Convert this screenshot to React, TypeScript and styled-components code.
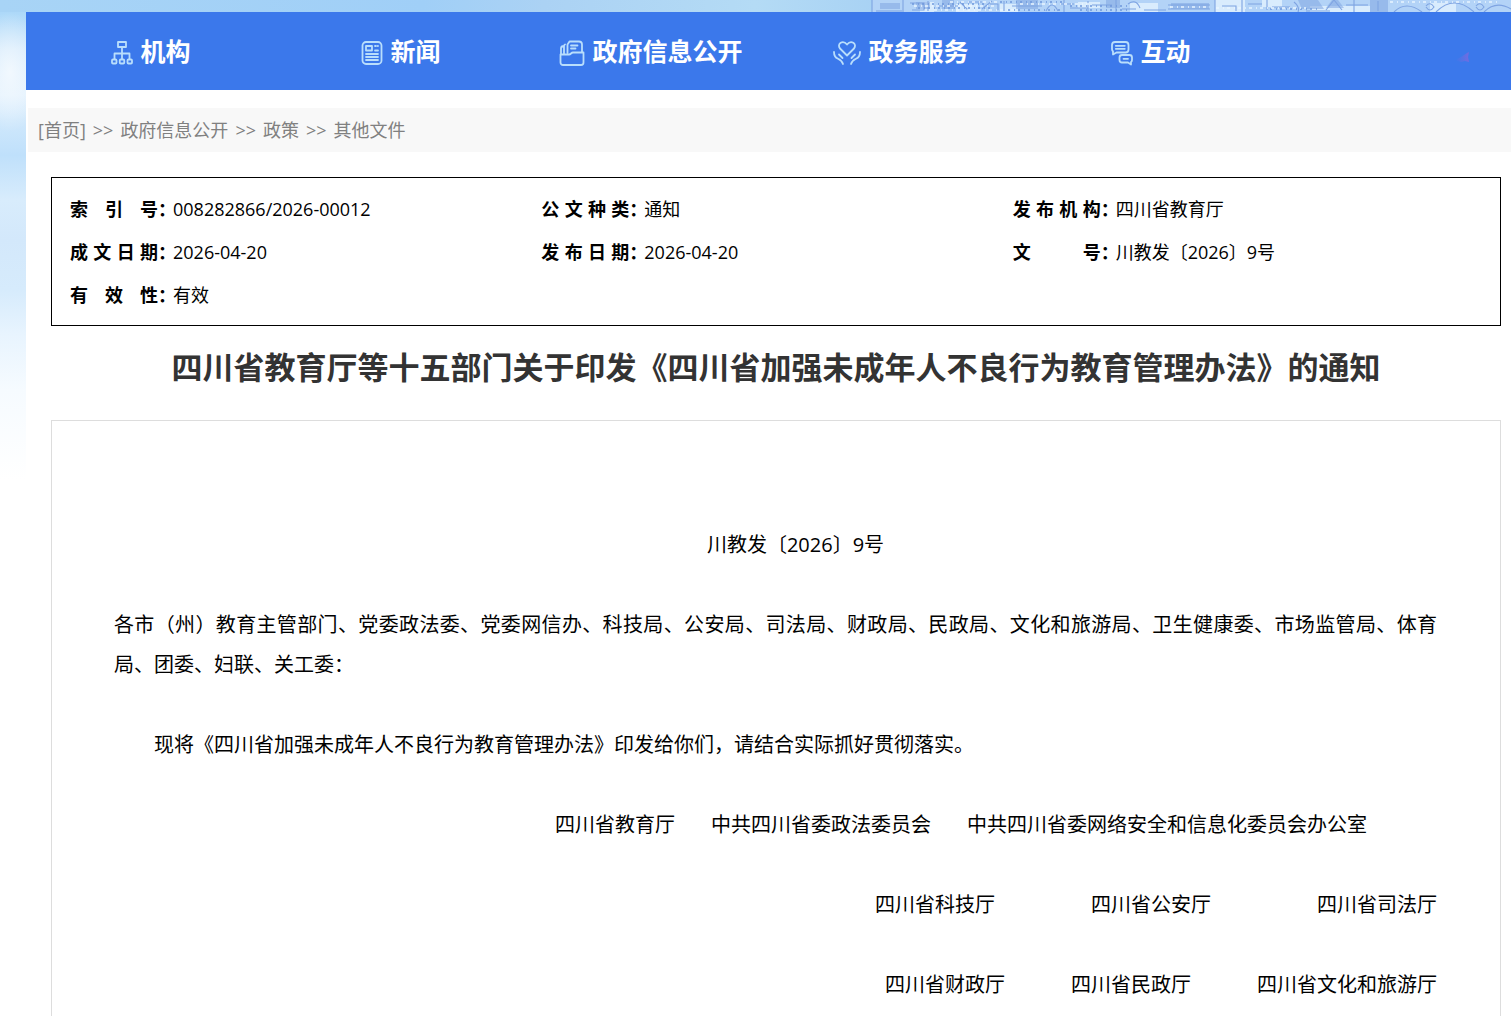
import React from "react";
import styled, { createGlobalStyle } from "styled-components";

const GlobalStyle = createGlobalStyle`
  *, *::before, *::after { box-sizing: border-box; }
  html { scrollbar-width: none; }
  body {
    margin: 0;
    background: #fff;
    color: #000;
    font-family: "Open Sans", "Noto Sans CJK SC", sans-serif;
    font-size: 18px;
  }
`;

const Site = styled.div`
  min-height: 100vh;
  overflow-x: clip;
  background:
    radial-gradient(ellipse 34px 60px at 10px 72px, rgba(247, 251, 255, 0.8) 0%, rgba(247, 251, 255, 0) 100%),
    linear-gradient(180deg, #a3d3f8 0, #b0daf9 16px, #d3e9fb 50px, #e2f1fd 95px, #d0e8fc 120px,
      #bfe0fb 155px, #d8ecfc 200px, #d3e8fb 240px, #d6ebfc 290px, #e8f4fe 335px, #f6fbff 390px, #fff 480px) no-repeat;
`;

const Banner = styled.div`
  display: flex;
  justify-content: flex-end;
  height: 12px;
  background: linear-gradient(90deg, #a8d4f6 0%, #a0cff7 28%, #abd2f4 36%, #b4dbf5 50%, #a8d2f4 58%, #bcdcf8 100%);
`;

const Skyline = styled.svg`
  display: block;
  width: 641px;
  height: 12px;
`;

const Page = styled.div`
  margin: 0 -15px 0 26px;
  min-height: calc(100vh - 12px);
  background: #fff;
`;

const Nav = styled.nav`
  display: grid;
  grid-template-columns: repeat(6, 1fr);
  height: 78px;
  background: #3b78eb;
`;

const NavLink = styled.a`
  display: flex;
  align-items: center;
  justify-content: center;
  gap: 7px;
  color: #fff;
  font-size: 25px;
  font-weight: 700;
  line-height: 78px;
  white-space: nowrap;
  text-decoration: none;
`;

const NavIcon = styled.svg`
  flex: none;
  height: 26px;
  margin-top: 4px;
  fill: none;
  stroke: #b9defc;
  stroke-width: 1.8;
  stroke-linejoin: round;
  stroke-linecap: round;
`;

const NavEnd = styled.div`
  display: flex;
  align-items: center;
  justify-content: flex-end;
  padding: 12px 57px 0 0;
`;

const Breadcrumb = styled.nav`
  display: flex;
  gap: 7px;
  margin: 18px 0 25px 2px;
  padding-left: 10px;
  background: #f8f8f8;
  color: #808080;
  line-height: 44px;
`;

const Crumb = styled.a`
  color: inherit;
  text-decoration: none;
`;

const Content = styled.main`
  padding: 0 25px;
`;

const Meta = styled.dl`
  display: grid;
  grid-template-columns: repeat(3, 1fr);
  margin: 0;
  padding: 10px 16px 8px 18px;
  border: 1px solid #000;
  line-height: 43px;
`;

const MetaItem = styled.div`
  display: flex;
`;

const MetaLabel = styled.dt`
  display: flex;
  width: 103px;
  font-weight: 700;
`;

const LabelText = styled.span`
  display: flex;
  flex: none;
  justify-content: space-between;
  width: 88px;
`;

const MetaValue = styled.dd`
  margin: 0;
`;

const Title = styled.h1`
  margin: 18px 0 30px;
  color: #333;
  font-size: 31px;
  font-weight: 700;
  line-height: 46px;
  text-align: center;
`;

const Article = styled.article`
  display: flex;
  flex-direction: column;
  gap: 40px;
  padding: 104px 63px 40px 62px;
  border: 1px solid #ddd;
  font-size: 20px;
  line-height: 40px;
`;

const Paragraph = styled.p<{ $indent?: boolean; $center?: boolean }>`
  margin: 0;
  text-align: ${(p) => (p.$center ? "center" : "justify")};
  text-indent: ${(p) => (p.$indent ? "2em" : "0")};
`;

const Signatures = styled.div<{ $inset?: number }>`
  display: flex;
  justify-content: flex-end;
  padding-right: ${(p) => p.$inset ?? 0}px;
`;

const Signatory = styled.span<{ $lead: number }>`
  margin-left: ${(p) => p.$lead}px;
`;

const OrgIcon = () => (
  <NavIcon width="22" viewBox="0 0 22 26" aria-hidden="true">
    <rect x="7" y="2" width="8" height="5" />
    <path d="M11 7v12M3.5 19v-5.500h15V19" />
    <rect x="1" y="19.500" width="4.500" height="4" rx="1" />
    <rect x="8.750" y="19.500" width="4.500" height="4" rx="1" />
    <rect x="16.500" y="19.500" width="4.500" height="4" rx="1" />
  </NavIcon>
);

const NewsIcon = () => (
  <NavIcon width="22" viewBox="0 0 22 26" aria-hidden="true">
    <rect x="1.500" y="2" width="19" height="22" rx="3.500" />
    <rect x="5" y="6" width="6" height="4.500" />
    <path d="M14 6h1M16.800 6h.2M14 10.500h3M5 14h12M5 17h12M5 20h12" />
  </NavIcon>
);

const FolderIcon = () => (
  <NavIcon width="26" viewBox="0 0 26 26" aria-hidden="true">
    <path d="M1.500 14.500h8.500c2 0 2-2 4-2h10.500v10a2.500 2.500 0 0 1-2.500 2.500H4a2.500 2.500 0 0 1-2.500-2.500z" />
    <path d="M2 14V8.500Q2 6 5 6M5 13.500V6q0-1 1-1.500M8.500 13V4.500L10.500 1.500H20q3 0 3 3V12" />
    <path d="M12 5.500h6.500M12 8.500h4.500" />
  </NavIcon>
);

const CareIcon = () => (
  <NavIcon width="28" viewBox="0 0 28 26" aria-hidden="true">
    <path d="M14 15.500L7 8.500C3.500 3.500 10-.500 14 4.500 18-.500 24.500 3.500 21 8.500z" />
    <path d="M1 12q0 5 4 6.800t5 5.200M6 14.500l3.500 3.500M27 12q0 5-4 6.800t-5 5.200M22 14.500L18.500 18" />
  </NavIcon>
);

const ChatIcon = () => (
  <NavIcon width="22" viewBox="0 0 22 26" aria-hidden="true">
    <path d="M4 2h10.500Q17.500 2 17.500 5v4.500q0 3-3 3H5.500L2 14.500v-3Q1 10.500 1 9V5Q1 2 4 2z" />
    <path d="M4.800 5.800h9M4.800 8.800h9M12.500 18.800h4.500" />
    <path d="M11 15h7.500q2.500 0 2.500 2.500v2.500q0 1.500-1 2v2.500l-3-2h-6q-2.500 0-2.500-2.500v-2.500Q8.500 15 11 15z" />
  </NavIcon>
);

const navItems = [
  { label: "机构", Icon: OrgIcon },
  { label: "新闻", Icon: NewsIcon },
  { label: "政府信息公开", Icon: FolderIcon },
  { label: "政务服务", Icon: CareIcon },
  { label: "互动", Icon: ChatIcon },
];

const crumbs = ["[首页]", "政府信息公开", "政策", "其他文件"];

const metaItems = [
  ["索引号", "008282866/2026-00012"],
  ["公文种类", "通知"],
  ["发布机构", "四川省教育厅"],
  ["成文日期", "2026-04-20"],
  ["发布日期", "2026-04-20"],
  ["文号", "川教发〔2026〕9号"],
  ["有效性", "有效"],
];

const signatureRows = [
  {
    inset: 70,
    names: [
      { name: "四川省教育厅", lead: 0 },
      { name: "中共四川省委政法委员会", lead: 36 },
      { name: "中共四川省委网络安全和信息化委员会办公室", lead: 36 },
    ],
  },
  {
    inset: 0,
    names: [
      { name: "四川省科技厅", lead: 0 },
      { name: "四川省公安厅", lead: 96 },
      { name: "四川省司法厅", lead: 106 },
    ],
  },
  {
    inset: 0,
    names: [
      { name: "四川省财政厅", lead: 0 },
      { name: "四川省民政厅", lead: 66 },
      { name: "四川省文化和旅游厅", lead: 66 },
    ],
  },
];

const BannerArt = () => (
  <Skyline viewBox="0 0 641 12" aria-hidden="true">
    <rect x="2" width="639" height="12" fill="#b3d3f7" />
    <path
      d="M50 2h14v10H50zM86 4h22v8H86zM130 4h18v8h-18zM208 2h22v6h-22zM260 3h28v9h-28zM345 0h30v12h-30zM392 0h20v7h-20zM440 6h60v6h-60zM560 3h26v9h-26z"
      fill="#d9ecfd"
    />
    <path
      d="M10 3h20v6H10zM46 2h14v7H46zM72 0h12v9H72zM146 0h22v9h-22zM236 0h14v8h-14zM301 3h38v6h-38zM428 0h20l6 9h-22zM462 0h6l6 8h-18zM500 0h18v12h-18z"
      fill="#7fa5e2"
      opacity=".55"
    />
    <g fill="none" stroke="#7fa4e2" strokeWidth="1.100">
      <path d="M2 0v12M6 11h26M33 0v12M40 3h14v7H42M58 1v10M66 6h22M90 2l8 8M98 2h14M112 9l10-8M120 4h8v6M134 1v10M142 6h30M176 11q6-12 12 0M190 4h14M194 0v12M200 8h18M218 1v11M222 5h20M246 0v12M252 9h14M258 4q8-6 12 4M274 10h22M298 5h42M298 9h42M345 0v12M352 6h14v5M372 0v12M378 4h14M397 0v10M402 7h18M424 2q6 5 4 10M436 11h24M456 10l8-10 8 10M476 5h22M484 0v12M508 1v10" />
      <path d="M524 12q12-12 28 0M556 6q4-5 8 1-4 6-8 0M566 12q18-18 38 0M606 6q4-5 8 1-4 6-8 0M614 12q12-12 27-3" />
    </g>
    <g fill="none" stroke="#6f98dc" strokeWidth="1.300" strokeDasharray="2 4 1 3">
      <path d="M42 4h72M48 8h76M130 2h66M138 10h56M200 6h60M210 10h50M400 9h50" />
    </g>
    <g stroke="#e9f5ff" strokeWidth="1.400" strokeDasharray="3 4 1 3">
      <path d="M44 6h80M64 10h80M80 2h50M150 4h70M300 7h40M346 8h90M520 2h110" />
    </g>
  </Skyline>
);

export default function App() {
  return (
    <Site>
      <GlobalStyle />
      <Banner>
        <BannerArt />
      </Banner>
      <Page>
        <Nav aria-label="主导航">
          {navItems.map(({ label, Icon }) => (
            <NavLink href="#" key={label}>
              <Icon />
              {label}
            </NavLink>
          ))}
          <NavEnd>
            <svg width="16" height="12" viewBox="0 0 16 12" aria-hidden="true">
              <defs>
                <linearGradient id="spark" x1="0" x2="1">
                  <stop offset="0" stopColor="#7a6cdf" stopOpacity="0" />
                  <stop offset="1" stopColor="#9a62d8" />
                </linearGradient>
              </defs>
              <path d="M2 9l6-3 6-4 2-1-1 5 1 5-4-1-4 1z" fill="url(#spark)" opacity=".6" />
            </svg>
          </NavEnd>
        </Nav>
        <Breadcrumb aria-label="当前位置">
          {crumbs.map((crumb, i) => (
            <React.Fragment key={crumb}>
              {i > 0 && <span>&gt;&gt;</span>}
              <Crumb href="#">{crumb}</Crumb>
            </React.Fragment>
          ))}
        </Breadcrumb>
        <Content>
          <Meta>
            {metaItems.map(([label, value]) => (
              <MetaItem key={label}>
                <MetaLabel>
                  <LabelText>
                    {[...label].map((char) => (
                      <span key={char}>{char}</span>
                    ))}
                  </LabelText>
                  ：
                </MetaLabel>
                <MetaValue>{value}</MetaValue>
              </MetaItem>
            ))}
          </Meta>
          <Title>四川省教育厅等十五部门关于印发《四川省加强未成年人不良行为教育管理办法》的通知</Title>
          <Article>
            <Paragraph $center $indent>川教发〔2026〕9号</Paragraph>
            <Paragraph>
              各市（州）教育主管部门、党委政法委、党委网信办、科技局、公安局、司法局、财政局、民政局、文化和旅游局、卫生健康委、市场监管局、体育局、团委、妇联、关工委：
            </Paragraph>
            <Paragraph $indent>
              现将《四川省加强未成年人不良行为教育管理办法》印发给你们，请结合实际抓好贯彻落实。
            </Paragraph>
            {signatureRows.map((row) => (
              <Signatures key={row.names[0].name} $inset={row.inset}>
                {row.names.map(({ name, lead }) => (
                  <Signatory key={name} $lead={lead}>{name}</Signatory>
                ))}
              </Signatures>
            ))}
          </Article>
        </Content>
      </Page>
    </Site>
  );
}
